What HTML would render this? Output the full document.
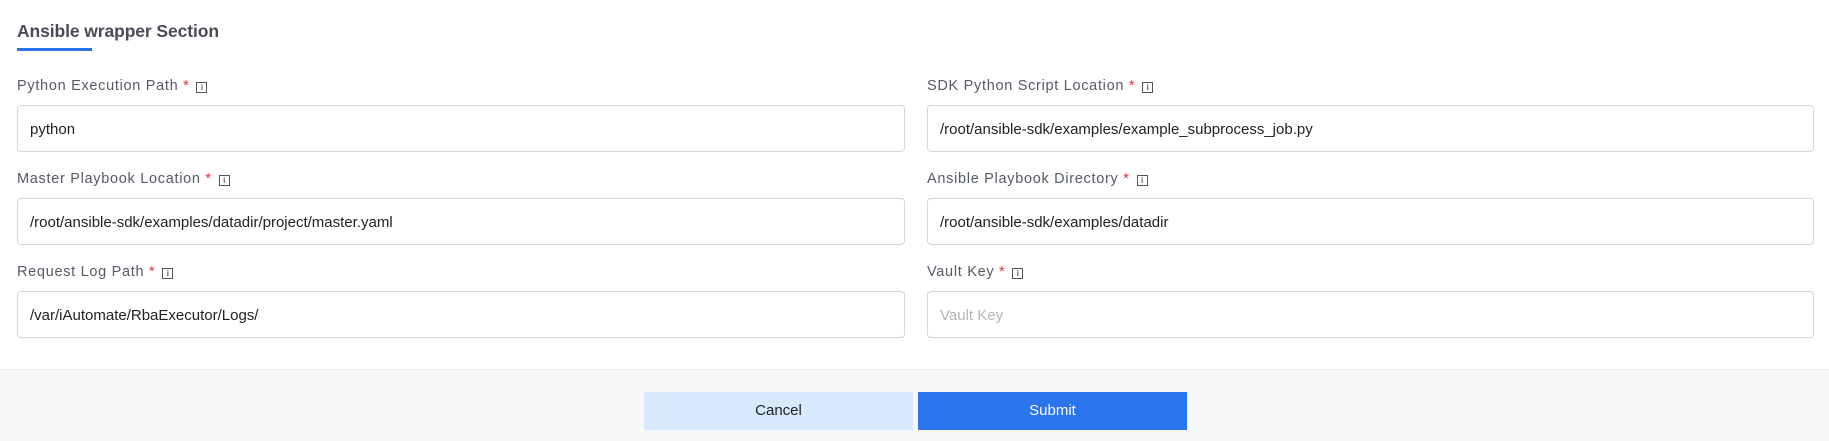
<!DOCTYPE html>
<html><head><meta charset="utf-8"><style>
*{box-sizing:border-box;margin:0;padding:0}
body{width:1829px;height:441px;background:#fff;font-family:"Liberation Sans",Arial,sans-serif;position:relative;overflow:hidden}
.title{position:absolute;left:17px;top:21px;font-size:17.5px;color:#4a4b57;font-weight:bold;letter-spacing:-0.1px}
.ul{position:absolute;left:17px;top:48px;width:75px;height:3px;background:#2a74ed}
.lab{position:absolute;font-size:14.5px;color:#555a66;letter-spacing:0.7px}
.lab .s{color:#e5303f;margin-left:0px}
.lab .i{display:inline-block;width:11px;height:11px;border:1px solid #555;font-size:8px;line-height:9px;text-align:center;margin-left:7px;vertical-align:0px;font-weight:bold;letter-spacing:0}
.in{position:absolute;height:47px;border:1px solid #d3d6db;border-radius:4px;font-size:15px;color:#222;padding-left:12px;line-height:47px}
.l{left:17px;width:888px}.r{left:927px;width:887px}
.ph{color:#b5b5b5}
.foot{position:absolute;left:0;top:369px;width:1829px;height:72px;background:#f6f7f9;border-top:1px solid #e8e9ec}
.btn{position:absolute;top:392px;height:38px;width:269px;font-size:15px;text-align:center;line-height:38px}
</style></head><body>
<div class="title">Ansible wrapper Section</div>
<div class="ul"></div>

<div class="lab" style="left:17px;top:78px">Python Execution Path<span class="s"> *</span><span class="i">i</span></div>
<div class="lab" style="left:927px;top:78px">SDK Python Script Location<span class="s"> *</span><span class="i">i</span></div>
<div class="in l" style="top:105px">python</div>
<div class="in r" style="top:105px">/root/ansible-sdk/examples/example_subprocess_job.py</div>

<div class="lab" style="left:17px;top:171px">Master Playbook Location<span class="s"> *</span><span class="i">i</span></div>
<div class="lab" style="left:927px;top:171px">Ansible Playbook Directory<span class="s"> *</span><span class="i">i</span></div>
<div class="in l" style="top:198px">/root/ansible-sdk/examples/datadir/project/master.yaml</div>
<div class="in r" style="top:198px">/root/ansible-sdk/examples/datadir</div>

<div class="lab" style="left:17px;top:264px">Request Log Path<span class="s"> *</span><span class="i">i</span></div>
<div class="lab" style="left:927px;top:264px">Vault Key<span class="s"> *</span><span class="i">i</span></div>
<div class="in l" style="top:291px">/var/iAutomate/RbaExecutor/Logs/</div>
<div class="in r ph" style="top:291px">Vault Key</div>

<div class="foot"></div>
<div class="btn" style="left:644px;background:#d6eafb;color:#222">Cancel</div>
<div class="btn" style="left:918px;background:#2a74ed;color:#fff">Submit</div>
</body></html>
